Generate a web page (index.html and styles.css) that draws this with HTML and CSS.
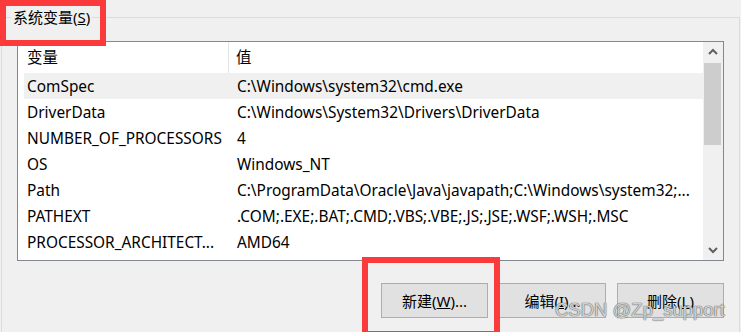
FILE: index.html
```html
<!DOCTYPE html>
<html lang="zh-CN">
<head>
    <meta charset="UTF-8">
    <meta name="viewport" content="width=device-width, initial-scale=1.0">
    <title>系统变量</title>
    <link rel="stylesheet" href="styles.css">
</head>
<body>
    <main class="dialog">
        <section class="group">
            <div class="group-title">系统变量(<u>S</u>)</div>
            <div class="listbox">
                <div class="list">
                    <div class="row head"><span class="c1">变量</span><span class="c2">值</span></div>
                    <div class="row sel"><span class="c1">ComSpec</span><span class="c2">C:\Windows\system32\cmd.exe</span></div>
                    <div class="row"><span class="c1">DriverData</span><span class="c2">C:\Windows\System32\Drivers\DriverData</span></div>
                    <div class="row"><span class="c1">NUMBER_OF_PROCESSORS</span><span class="c2">4</span></div>
                    <div class="row"><span class="c1">OS</span><span class="c2">Windows_NT</span></div>
                    <div class="row"><span class="c1">Path</span><span class="c2">C:\ProgramData\Oracle\Java\javapath;C:\Windows\system32;...</span></div>
                    <div class="row"><span class="c1">PATHEXT</span><span class="c2">.COM;.EXE;.BAT;.CMD;.VBS;.VBE;.JS;.JSE;.WSF;.WSH;.MSC</span></div>
                    <div class="row"><span class="c1">PROCESSOR_ARCHITECT...</span><span class="c2">AMD64</span></div>
                </div>
                <div class="scrollbar">
                    <div class="arrow">
                        <svg width="10" height="7" viewBox="0 0 10 7"><path d="M1 6 L5 2 L9 6" fill="none" stroke="#606060" stroke-width="2"/></svg>
                    </div>
                    <div class="thumb"></div>
                    <div class="track"></div>
                    <div class="arrow">
                        <svg width="10" height="7" viewBox="0 0 10 7"><path d="M1 1 L5 5 L9 1" fill="none" stroke="#606060" stroke-width="2"/></svg>
                    </div>
                </div>
            </div>
            <div class="buttons">
                <button>新建(<u>W</u>)...</button>
                <button>编辑(<u>I</u>)...</button>
                <button>删除(<u>L</u>)</button>
            </div>
        </section>
        <div class="mark mark-title"></div>
        <div class="mark mark-new"></div>
        <div class="watermark">CSDN @Zp_support</div>
    </main>
</body>
</html>
```

FILE: styles.css
```css
* {
    box-sizing: border-box;
}
body {
    margin: 0;
    background: #f0f0f0;
    font-family: "Noto Sans", "Noto Sans CJK SC", sans-serif;
    font-size: 15.4px;
    color: #000;
}
.dialog {
    position: relative;
    width: 741px;
    height: 332px;
    overflow: hidden;
}
.group {
    position: relative;
    margin: 17px 1px 0 1px;
    height: 330px;
    border: 1px solid #dcdcdc;
    border-bottom: none;
    padding: 23px 15px 0 15px;
}
.group-title {
    position: absolute;
    top: -10px;
    left: 9px;
    padding: 0 2px;
    background: #f0f0f0;
    font-size: 15px;
    line-height: 19px;
}
.listbox {
    display: flex;
    height: 220px;
    border: 1px solid #828790;
    background: #fff;
}
.list {
    flex: 1;
    overflow: hidden;
}
.row {
    display: flex;
    height: 26px;
    padding-top: 2px;
    line-height: 24px;
    margin-left: 6px;
    white-space: nowrap;
}
.row .c1 {
    width: 205px;
    padding-left: 3px;
    flex: none;
}
.row .c2 {
    padding-left: 8px;
}
.row.head {
    height: 31px;
    padding-top: 0;
    line-height: 31px;
    margin-left: 0;
}
.row.head .c1 {
    width: 211px;
    padding-left: 9px;
    border-right: 1px solid #e5e5e5;
}
.row.head .c2 {
    padding-left: 7px;
}
.row.sel {
    background: #f0f0f0;
}
.scrollbar {
    width: 20px;
    display: flex;
    flex-direction: column;
    background: #f0f0f0;
}
.arrow {
    height: 19px;
    display: flex;
    align-items: center;
    justify-content: center;
}
.thumb {
    height: 82px;
    margin: 2px 2px 0 1px;
    background: #cdcdcd;
}
.track {
    flex: 1;
}
.buttons {
    display: flex;
    justify-content: flex-end;
    gap: 11px;
    margin-top: 22px;
}
.buttons button {
    width: 107px;
    height: 35px;
    background: #e1e1e1;
    border: 1px solid #adadad;
    font-family: inherit;
    font-size: 15px;
    color: #000;
    padding: 0;
}
.mark {
    position: absolute;
    border: 6px solid #fb3b3b;
}
.mark-title {
    left: 0;
    top: 0;
    width: 106px;
    height: 46px;
}
.mark-new {
    left: 362px;
    top: 257px;
    width: 138px;
    height: 80px;
}
.watermark {
    position: absolute;
    left: 555px;
    top: 299px;
    font-family: "Liberation Sans", sans-serif;
    font-size: 18.5px;
    color: rgba(225, 225, 225, 0.9);
    text-shadow: 0 0 1px #555, 0 0 1px #555;
}
```
